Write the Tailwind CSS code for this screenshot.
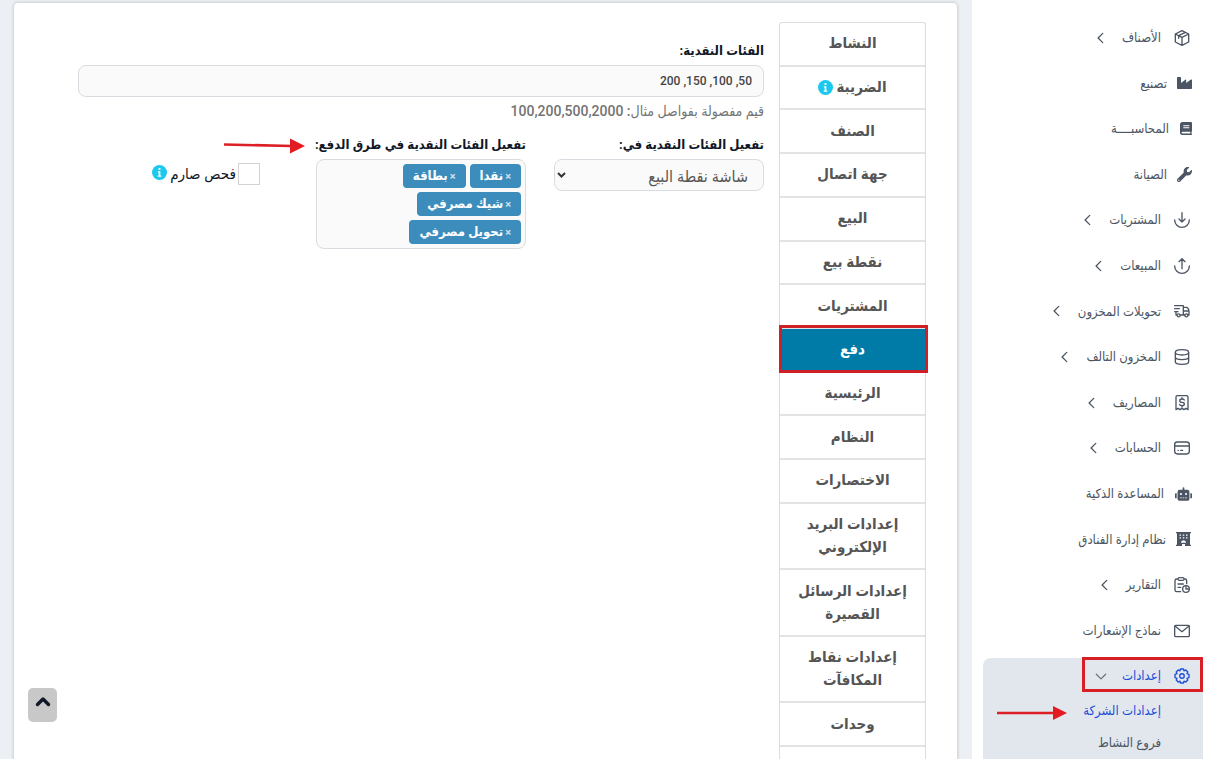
<!DOCTYPE html>
<html lang="ar" dir="rtl">
<head>
<meta charset="utf-8">
<title>إعدادات الشركة</title>
<meta name="viewport" content="width=device-width, initial-scale=1">
<script src="https://cdn.jsdelivr.net/npm/@tailwindcss/browser@4"></script>
</head>
<body class="font-['Roboto','DejaVu_Sans_Condensed','DejaVu_Sans',sans-serif] bg-[#ecf0f5] text-[#111827]">
<svg class="hidden" aria-hidden="true">
  <symbol id="chev" viewBox="0 0 24 24"><path d="M15 4l-8 8 8 8" fill="none" stroke="currentColor" stroke-width="2.2" stroke-linecap="round" stroke-linejoin="round"/></symbol>
  <symbol id="info" viewBox="0 0 16 16"><circle cx="8" cy="8" r="8" fill="#1cc8ee"/><path d="M7 3.300h2v2H7zM6.200 6.600h2.700v4.600h1v1.300H6.100v-1.300h1V7.900h-.9z" fill="#fff"/></symbol>
</svg>
<div class="flex h-screen overflow-hidden relative">

  <aside class="w-[242px] shrink-0 bg-white text-[#4b5563] text-[13px]">
    <nav class="pt-[15px] relative" aria-label="القائمة الرئيسية">
      <div class="absolute top-[658px] inset-x-[11px] h-[140px] rounded-lg bg-[#e2e7ee]"></div>
      <ul class="relative grid auto-rows-fr h-[684px] ps-6 pe-[11px]">
        <li class="flex"><a href="#" class="flex items-center gap-[13px]">
          <svg class="size-4" viewBox="0 0 24 24" fill="none" stroke="currentColor" stroke-width="2" stroke-linejoin="round" stroke-linecap="round"><path d="M12 1l10 5v12l-10 5-10-5V6zM2 6l10 5 10-5M12 11v12M17 3.500L7 8.500v4"/></svg>
          <span>الأصناف</span><svg class="size-3.5 ms-px"><use href="#chev"/></svg></a></li>
        <li class="flex"><a href="#" class="flex items-center gap-[10px] -ms-[2px]">
          <svg class="w-[15px] h-3" viewBox="0 0 15 12" fill="currentColor"><path d="M0 .8Q0 0 .8 0h2.400Q4 0 4 .8V6l4.600-3.400q.6-.3.6.4V6l4.700-3.400q1-.4 1.100.4v8.200q0 .8-.8.8H.8q-.8 0-.8-.8z"/></svg>
          <span>تصنيع</span></a></li>
        <li class="flex"><a href="#" class="flex items-center gap-[11px] -ms-[2px]">
          <svg class="w-3 h-[13px]" viewBox="0 0 12 13" fill="currentColor" fill-rule="evenodd"><path d="M2.500 0H11q1 0 1 1v8q0 .6-.5.9v1.700q.5.100.5.700t-.7.700H2.500Q0 13 0 10.500v-8Q0 0 2.500 0zM3.300 3.200v1h6v-1zM3.300 5.200v1h6v-1zM2.500 9.800q-.9 0-.9.800t.9.800h7.800V9.800z"/></svg>
          <span>المحاسبــــة</span></a></li>
        <li class="flex"><a href="#" class="flex items-center gap-[10px] -ms-[2px]">
          <svg class="size-[15px]" viewBox="0 0 512 512" fill="currentColor"><path d="M507.700 109.100c-2.200-9-13.500-12.100-20.100-5.500l-74.400 74.400-67.900-11.300-11.300-67.900 74.400-74.400c6.600-6.600 3.400-17.900-5.700-20.200-47.400-11.700-99.600.9-136.600 37.900-39.600 39.600-50.500 97.100-34 147.200L18.700 402.800c-25 25-25 65.500 0 90.500s65.500 25 90.500 0l213.200-213.200c50.100 16.700 107.500 5.700 147.400-34.200 37.100-37.100 49.700-89.300 37.900-136.800zM64 472c-13.200 0-24-10.800-24-24s10.700-24 24-24 24 10.700 24 24-10.700 24-24 24z"/></svg>
          <span>الصيانة</span></a></li>
        <li class="flex"><a href="#" class="flex items-center gap-[13px]">
          <svg class="size-4" viewBox="0 0 24 24" fill="none" stroke="currentColor" stroke-width="2" stroke-linejoin="round" stroke-linecap="round"><path d="M12 1v14M7.500 10.500L12 15l4.500-4.500M1 12a11 11 0 0022 0"/></svg>
          <span>المشتريات</span><svg class="size-3.5 ms-px"><use href="#chev"/></svg></a></li>
        <li class="flex"><a href="#" class="flex items-center gap-[13px]">
          <svg class="size-4" viewBox="0 0 24 24" fill="none" stroke="currentColor" stroke-width="2" stroke-linejoin="round" stroke-linecap="round"><path d="M12 16V1M7.500 5.500L12 1l4.500 4.500M1 12a11 11 0 0022 0"/></svg>
          <span>المبيعات</span><svg class="size-3.5 ms-px"><use href="#chev"/></svg></a></li>
        <li class="flex"><a href="#" class="flex items-center gap-[13px]">
          <svg class="size-4" viewBox="0 0 24 24" fill="none" stroke="currentColor" stroke-width="2" stroke-linejoin="round" stroke-linecap="round"><path d="M1 4h13v14H9.500M1 8.500h7M3 13v5h1M1 13h5M14 6.500h4.500q3 0 4 5.500v6h-1.500M14 12h8.500M14 18h2"/><circle cx="7" cy="18.500" r="2.300"/><circle cx="18.500" cy="18.500" r="2.300"/></svg>
          <span>تحويلات المخزون</span><svg class="size-3.5 ms-px"><use href="#chev"/></svg></a></li>
        <li class="flex"><a href="#" class="flex items-center gap-[13px]">
          <svg class="size-4" viewBox="0 0 24 24" fill="none" stroke="currentColor" stroke-width="2"><ellipse cx="12" cy="5" rx="10" ry="4"/><path d="M2 5v14c0 5.300 20 5.300 20 0V5M2 12c0 5.300 20 5.300 20 0"/></svg>
          <span>المخزون التالف</span><svg class="size-3.5 ms-px"><use href="#chev"/></svg></a></li>
        <li class="flex"><a href="#" class="flex items-center gap-[13px]">
          <svg class="size-4" viewBox="0 0 24 24" fill="none" stroke="currentColor" stroke-width="2" stroke-linejoin="round" stroke-linecap="round"><path d="M3 22V3q0-2 2-2h14q2 0 2 2v19l-3-2-3 2-3-2-3 2-3-2zM15.500 7.500q-.8-1.500-3.500-1.500-3.300 0-3.300 2.500T12 11q3.500 0 3.500 2.500T12 16q-3 0-3.700-1.700M12 4v2M12 16v2"/></svg>
          <span>المصاريف</span><svg class="size-3.5 ms-px"><use href="#chev"/></svg></a></li>
        <li class="flex"><a href="#" class="flex items-center gap-[13px]">
          <svg class="size-4" viewBox="0 0 24 24" fill="none" stroke="currentColor" stroke-width="2" stroke-linecap="round"><rect x="1" y="3" width="22" height="18" rx="4"/><path d="M1 9h22M6 15.500h.5M10 15.500h3"/></svg>
          <span>الحسابات</span><svg class="size-3.5 ms-px"><use href="#chev"/></svg></a></li>
        <li class="flex"><a href="#" class="flex items-center gap-[11px] -ms-[2px]">
          <svg class="w-[17px] h-[14px]" viewBox="0 0 640 512" fill="currentColor"><path d="M32 224h32v192H32a32 32 0 01-32-32V256a32 32 0 0132-32zm512-48v272a64 64 0 01-64 64H160a64 64 0 01-64-64V176a80 80 0 0180-80h112V32a32 32 0 0164 0v64h112a80 80 0 0180 80zM264 256a40 40 0 10-80 0 40 40 0 0080 0zm-8 128h-64v32h64zm96 0h-64v32h64zm104-128a40 40 0 10-80 0 40 40 0 0080 0zm-8 128h-64v32h64zm192-128v128a32 32 0 01-32 32h-32V224h32a32 32 0 0132 32z"/></svg>
          <span>المساعدة الذكية</span></a></li>
        <li class="flex"><a href="#" class="flex items-center gap-[10px] -ms-px">
          <svg class="w-[15px] h-[14px]" viewBox="0 0 15 14" fill="currentColor" fill-rule="evenodd"><path d="M0 0h15v1.300h-1v11.400h1V14H9v-2H6v2H0v-1.300h1V1.300H0zM3.500 2.500v1.300h1.500V2.500zM6.800 2.500v1.300h1.500V2.500zM10 2.500v1.300h1.500V2.500zM3.500 5.300v1.300h1.500V5.300zM6.800 5.300v1.300h1.500V5.300zM10 5.300v1.300h1.500V5.300zM4.800 10.800h5.400q-.3-2.600-2.700-2.600t-2.700 2.600z"/></svg>
          <span>نظام إدارة الفنادق</span></a></li>
        <li class="flex"><a href="#" class="flex items-center gap-[13px]">
          <svg class="size-4" viewBox="0 0 24 24" fill="none" stroke="currentColor" stroke-width="2" stroke-linejoin="round" stroke-linecap="round"><path d="M6 3H4Q1.500 3 1.500 5.500v14Q1.500 22 4 22h6M15 3h1.500Q19 3 19 5.500V10M8 1h5q2 0 2 2t-2 2H8Q6 5 6 3t2-2zM6 10.500h8M6 15.500h4"/><circle cx="18" cy="18" r="5"/><path d="M18 14v4h4"/></svg>
          <span>التقارير</span><svg class="size-3.5 ms-px"><use href="#chev"/></svg></a></li>
        <li class="flex"><a href="#" class="flex items-center gap-[13px]">
          <svg class="size-4" viewBox="0 0 24 24" fill="none" stroke="currentColor" stroke-width="2" stroke-linejoin="round" stroke-linecap="round"><rect x="1" y="3.500" width="22" height="17" rx="1.500"/><path d="M2 5l10 8 10-8"/></svg>
          <span>نماذج الإشعارات</span></a></li>
        <li class="flex text-[#1d4ed8]"><a href="#" class="flex items-center gap-[13px]">
          <svg class="size-4" viewBox="0 0 24 24" fill="none" stroke="currentColor" stroke-width="2" stroke-linejoin="round"><path d="M9.800 1.500h4.400l.8 2.700 2.700-1.300 3 3-1.300 2.700 3.100 1v4.800l-3.100 1 1.300 2.700-3 3-2.700-1.300-.8 2.700H9.800L9 19.800l-2.700 1.300-3-3 1.300-2.700-3.100-1V9.600l3.100-1-1.300-2.700 3-3L9 4.200z"/><circle cx="12" cy="12" r="3.400"/></svg>
          <span>إعدادات</span><svg class="size-3.5 ms-px -rotate-90 text-[#6b7280]"><use href="#chev"/></svg></a></li>
      </ul>
      <ul class="relative ps-[53px] leading-8 -mt-[4px]">
        <li><a href="#" class="text-[#1d4ed8]">إعدادات الشركة</a></li>
        <li><a href="#">فروع النشاط</a></li>
      </ul>
    </nav>
  </aside>

  <main class="flex-1 min-w-0 pt-[3px] ps-[15px] pe-[14px]">
    <div class="flex items-start gap-[15px] min-h-full bg-white rounded-t-[4px] shadow-[0_0_3px_1px_rgba(0,0,0,0.14)] pt-[19px] ps-[31px] pe-16">
      <nav class="w-[147px] shrink-0 border-x border-t border-[#ddd] rounded-t-[3px] text-[15px] leading-[23px] font-bold text-[#555] text-center" aria-label="أقسام الإعدادات">
        <div class="flex flex-col h-[724px]">
          <a href="#" class="flex-[42_1_0] flex items-center justify-center border-b-2 border-[#e3e3e3]">النشاط</a>
          <a href="#" class="flex-[42_1_0] flex items-center justify-center gap-[3px] border-b-2 border-[#e3e3e3]">الضريبة <svg class="size-[15px]"><use href="#info"/></svg></a>
          <a href="#" class="flex-[42_1_0] flex items-center justify-center border-b-2 border-[#e3e3e3]">الصنف</a>
          <a href="#" class="flex-[42_1_0] flex items-center justify-center border-b-2 border-[#e3e3e3]">جهة اتصال</a>
          <a href="#" class="flex-[42_1_0] flex items-center justify-center border-b-2 border-[#e3e3e3]">البيع</a>
          <a href="#" class="flex-[42_1_0] flex items-center justify-center border-b-2 border-[#e3e3e3]">نقطة بيع</a>
          <a href="#" class="flex-[42_1_0] flex items-center justify-center border-b-2 border-[#e3e3e3]">المشتريات</a>
          <a href="#" class="flex-[42_1_0] flex items-center justify-center border-b-2 border-[#007ba7] bg-[#007ba7] text-white" aria-current="page">دفع</a>
          <a href="#" class="flex-[42_1_0] flex items-center justify-center border-b-2 border-[#e3e3e3]">الرئيسية</a>
          <a href="#" class="flex-[42_1_0] flex items-center justify-center border-b-2 border-[#e3e3e3]">النظام</a>
          <a href="#" class="flex-[42_1_0] flex items-center justify-center border-b-2 border-[#e3e3e3]">الاختصارات</a>
          <a href="#" class="flex-[65_1_0] flex items-center justify-center border-b-2 border-[#e3e3e3]">إعدادات البريد<br>الإلكتروني</a>
          <a href="#" class="flex-[65_1_0] flex items-center justify-center border-b-2 border-[#e3e3e3]">إعدادات الرسائل<br>القصيرة</a>
          <a href="#" class="flex-[65_1_0] flex items-center justify-center border-b-2 border-[#e3e3e3]">إعدادات نقاط<br>المكافآت</a>
          <a href="#" class="flex-[42_1_0] flex items-center justify-center border-b-2 border-[#e3e3e3]">وحدات</a>
        </div>
        <div class="h-11"></div>
      </nav>

      <form class="flex-1 min-w-0 pt-[17px] text-[13px]">
        <label for="denoms" class="block font-bold leading-6 mb-[2px]">الفئات النقدية:</label>
        <input id="denoms" type="text" value="50, 100, 150, 200" class="block w-full h-8 rounded-lg border border-[#d9dbe0] bg-[#fafafa] px-[11px] text-[12px] font-medium text-[#444]">
        <p class="text-[14px] leading-7 font-medium text-[#737373]">قيم مفصولة بفواصل مثال: 100,200,500,2000</p>

        <div class="grid grid-cols-3 gap-7 mt-2">
          <div>
            <label for="where" class="block font-bold leading-6 mb-[2px] whitespace-nowrap">تفعيل الفئات النقدية في:</label>
            <div class="relative">
              <select id="where" class="block w-full h-8 appearance-none rounded-lg border border-[#d9dbe0] bg-[#fafafa] ps-[15px] pt-1 text-[16px] leading-6 text-[#555]"><option>شاشة نقطة البيع</option></select>
              <svg class="absolute left-[3px] top-[11px] w-[9px] h-[9px] pointer-events-none text-[#333]" viewBox="0 0 9 9"><path d="M1 3l3.500 3.500L8 3" fill="none" stroke="currentColor" stroke-width="2"/></svg>
            </div>
          </div>
          <div role="group" aria-labelledby="methods">
            <span id="methods" class="block font-bold leading-6 mb-[2px] whitespace-nowrap">تفعيل الفئات النقدية في طرق الدفع:</span>
            <div class="flex flex-wrap gap-1 rounded-lg border border-[#d9dbe0] bg-[#fafafa] px-1 py-1 pe-10 text-white font-bold">
              <span class="flex items-center gap-[2px] h-6 rounded-[4px] bg-[#3c8dbc] px-[10px]"><button type="button" class="text-[11px] text-white/75 pt-[2px]" aria-label="إزالة نقدا">×</button>نقدا</span>
              <span class="flex items-center gap-[2px] h-6 rounded-[4px] bg-[#3c8dbc] px-[10px]"><button type="button" class="text-[11px] text-white/75 pt-[2px]" aria-label="إزالة بطاقة">×</button>بطاقة</span>
              <span class="flex items-center gap-[2px] h-6 rounded-[4px] bg-[#3c8dbc] px-[10px]"><button type="button" class="text-[11px] text-white/75 pt-[2px]" aria-label="إزالة شيك مصرفي">×</button>شيك مصرفي</span>
              <span class="flex items-center gap-[2px] h-6 rounded-[4px] bg-[#3c8dbc] px-[10px]"><button type="button" class="text-[11px] text-white/75 pt-[2px]" aria-label="إزالة تحويل مصرفي">×</button>تحويل مصرفي</span>
            </div>
          </div>
          <div class="flex items-start ps-7 pt-[30px]">
            <input id="strict" type="checkbox" class="appearance-none size-[22px] shrink-0 border border-[#d2d2d2] bg-white">
            <label for="strict" class="ms-[2px] text-[15px] leading-[22px] whitespace-nowrap">فحص صارم</label>
            <svg class="size-[15px] ms-[3px] mt-[2px] shrink-0"><use href="#info"/></svg>
          </div>
        </div>
      </form>
    </div>
  </main>

  <!-- scroll-to-top button -->
  <button type="button" aria-label="إلى الأعلى" class="absolute left-7 top-[688px] w-[29px] h-[34px] rounded-[5px] bg-[#c8c8c8] flex items-center justify-center pb-[6px]"><svg class="w-4 h-3" viewBox="0 0 16 12"><path d="M2.500 8.500L8 3l5.500 5.500" fill="none" stroke="#111827" stroke-width="3.400" stroke-linecap="round" stroke-linejoin="round"/></svg></button>

  <!-- callout frames and arrows -->
  <div class="absolute left-[779px] top-[325px] w-[149px] h-[48px] border-[3px] border-[#cf2027] pointer-events-none"></div>
  <div class="absolute left-[1082px] top-[657px] w-[121px] h-[35px] border-[3px] border-[#d91f26] pointer-events-none"></div>
  <svg class="absolute left-[223px] top-[138px] w-[82px] h-[16px]" viewBox="0 0 82 16"><path d="M1 6.500L69 8" stroke="#dd1f26" stroke-width="2.600"/><path d="M67 .5L82 8l-15 7.500z" fill="#e31b23"/></svg>
  <svg class="absolute left-[997px] top-[705px] w-[70px] h-[16px]" viewBox="0 0 70 16"><path d="M0 8h57" stroke="#dd1f26" stroke-width="2.600"/><path d="M56 1l14 7-14 7z" fill="#e31b23"/></svg>
</div>
</body>
</html>
